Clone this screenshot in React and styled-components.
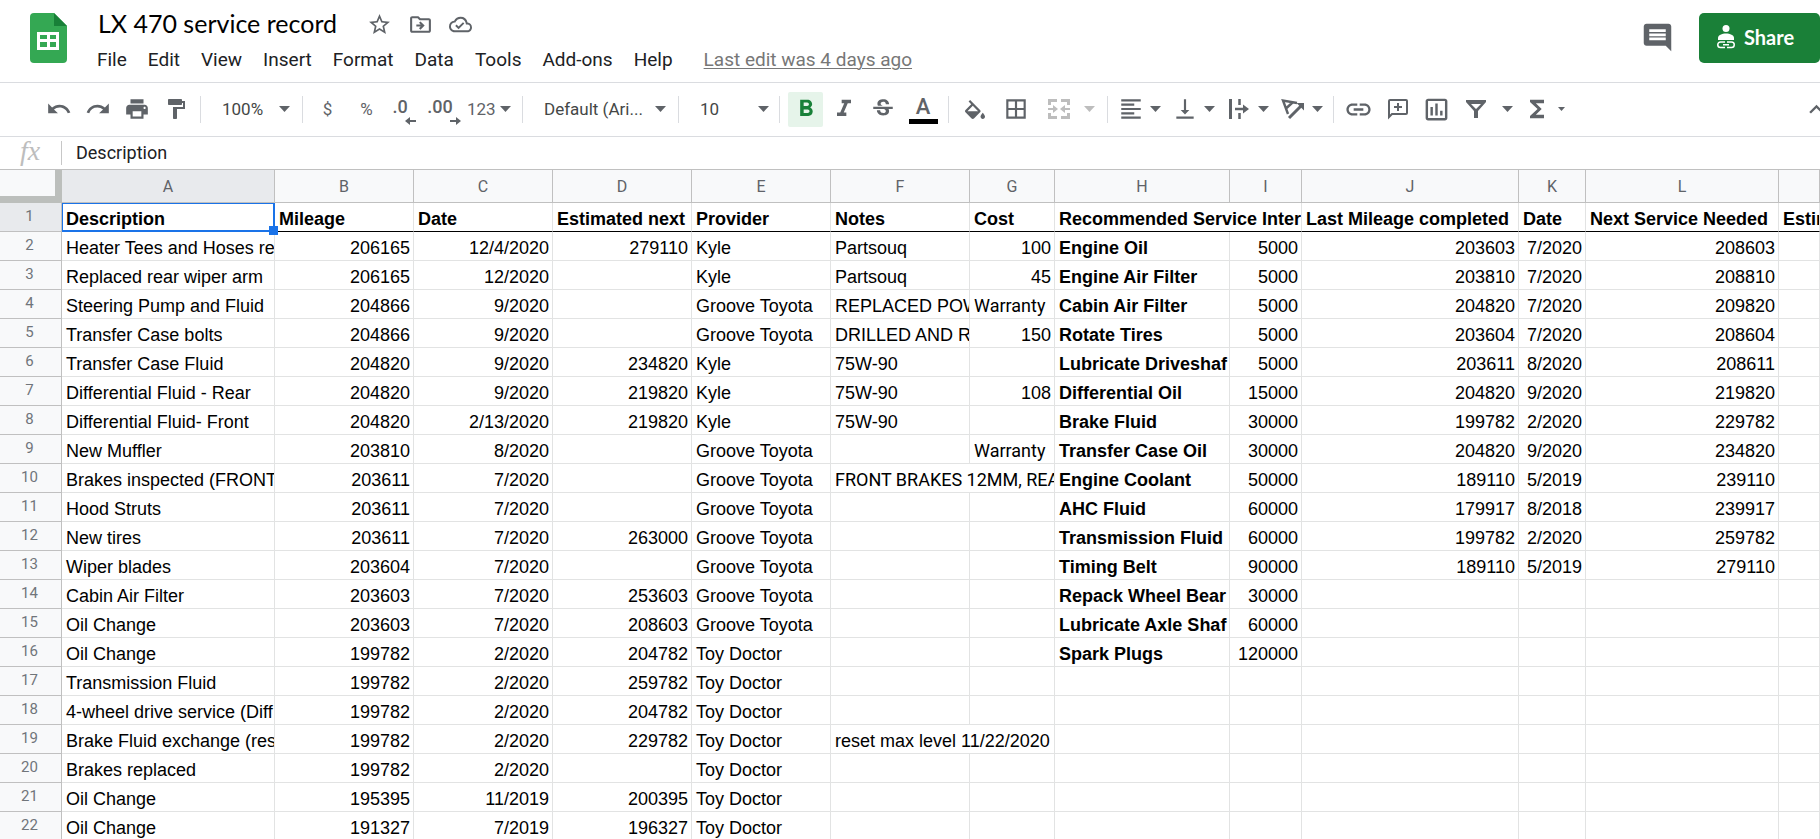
import React from "react";
import styled, { createGlobalStyle } from "styled-components";
import {
  MdUndo, MdRedo, MdPrint, MdFormatPaint, MdFormatBold, MdFormatItalic, MdStrikethroughS,
  MdBorderAll, MdFormatAlignLeft, MdVerticalAlignBottom, MdLink, MdFunctions, MdStarBorder,
  MdOutlineDriveFileMove, MdOutlineCloudDone, MdOutlineInsertChart, MdComment, MdExpandLess,
} from "react-icons/md";

const GlobalStyle = createGlobalStyle`
  * { box-sizing: border-box; }
  body {
    margin: 0;
    background: #fff;
    color: #000;
    font-family: Roboto, sans-serif;
    overflow: hidden;
  }
  button { font: inherit; color: inherit; border: 0; background: none; padding: 0; }
`;

const Header = styled.header`
  display: flex;
  height: 83px;
  border-bottom: 1px solid #dadce0;
  padding: 0 0 0 30px;
`;
const Logo = styled.a`
  margin-top: 13px;
  width: 37px;
  height: 50px;
  svg { display: block; }
`;
const Heading = styled.div`
  display: flex;
  flex-direction: column;
  padding-left: 20px;
  flex: 1;
  min-width: 0;
`;
const TitleRow = styled.div`
  display: flex;
  align-items: center;
  height: 46px;
  padding: 2px 0 0 11px;
`;
const Title = styled.h1`
  margin: 0 30px 0 0;
  padding-bottom: 2px;
  font: 400 25px/32px Lato, sans-serif;
  white-space: nowrap;
`;
const TitleButton = styled.button`
  display: flex;
  color: #5f6368;
  margin-right: 16px;
`;
const MenuRow = styled.nav`
  display: flex;
  align-items: center;
  gap: 1px;
  height: 28px;
  white-space: nowrap;
`;
const MenuButton = styled.button`
  font-size: 19px;
  line-height: 28px;
  padding: 0 10px;
  color: #202124;
`;
const EditLink = styled.a`
  margin-left: 20px;
  font-size: 19px;
  line-height: 28px;
  color: #777;
  text-underline-offset: 2px;
  text-decoration-thickness: 1px;
`;
const HeaderActions = styled.div`
  display: flex;
  align-items: flex-start;
  padding-top: 13px;
  gap: 25px;
`;
const CommentButton = styled.button`
  display: flex;
  align-items: center;
  height: 48px;
  color: #5f6368;
`;
const ShareButton = styled.button`
  display: flex;
  align-items: center;
  gap: 8px;
  width: 121px;
  height: 50px;
  padding: 0 0 2px 17px;
  border-radius: 5px;
  background: #1a8038;
  color: #fff;
  font: 700 20px/24px Lato, sans-serif;
`;

const Toolbar = styled.div`
  display: flex;
  align-items: center;
  height: 54px;
  padding: 0 0 1px 39px;
  border-bottom: 1px solid #dadce0;
  color: #5f6368;
  overflow: hidden;
`;
const Tool = styled.button`
  flex: none;
  display: flex;
  align-items: center;
  justify-content: center;
  width: ${(p) => p.$w || 39}px;
  height: 35px;
  font-size: 17px;
  color: ${(p) => (p.$muted ? "#bdbdbd" : "#5f6368")};
`;
const ActiveTool = styled(Tool)`
  width: 35px;
  margin: 0 1px 0 3px;
  border-radius: 2px;
  background: #e6f4ea;
  color: #188038;
`;
const MenuTool = styled(Tool)`
  justify-content: flex-start;
  padding-left: ${(p) => p.$pad || 5}px;
  gap: ${(p) => p.$gap || 6}px;
`;
const Choice = styled(MenuTool)`
  justify-content: space-between;
  padding-right: ${(p) => p.$right}px;
  color: #444746;
  svg { color: #5f6368; }
`;
const Decimals = styled.span`
  display: flex;
  flex-direction: column;
  align-items: flex-end;
  height: 25px;
  line-height: 20px;
  font-size: 18px;
  font-weight: 500;
  svg { display: block; flex: none; margin-right: -8px; }
`;
const TextColor = styled.span`
  display: flex;
  flex-direction: column;
  align-items: center;
  width: 29px;
  font-weight: 500;
  font-size: 22px;
  line-height: 24px;
  border-bottom: 5px solid #000;
`;
const Collapse = styled.button`
  flex: none;
  width: 18px;
  overflow: hidden;
  margin-left: auto;
  color: #5f6368;
  svg { display: block; }
`;
const Divider = styled.span`
  flex: none;
  width: 1px;
  height: 27px;
  margin: 0 5px 0 4px;
  background: #dadce0;
`;

const FormulaBar = styled.div`
  display: flex;
  align-items: center;
  height: 33px;
  padding-bottom: 1px;
  border-bottom: 1px solid #c0c0c0;
`;
const FormulaLabel = styled.label`
  width: 62px;
  height: 24px;
  padding-left: 20px;
  border-right: 1px solid #c7c7c7;
  font: italic 28px/20px "Liberation Serif", serif;
  color: #bdbdbd;
`;
const FormulaInput = styled.input`
  flex: 1;
  min-width: 0;
  height: 28px;
  padding: 0 14px;
  border: 0;
  outline: 0;
  font: 400 18px/28px Roboto, sans-serif;
  color: #202124;
`;

const Sheet = styled.table`
  width: 100%;
  table-layout: fixed;
  border-collapse: separate;
  border-spacing: 0;
`;
const Col = styled.col`
  width: ${(p) => (p.$w ? `${p.$w}px` : "auto")};
`;
const Corner = styled.td`
  height: 33px;
  padding: 0;
  background: #f8f9fa;
  border-right: 7px solid #bcbfbc;
  border-bottom: 7px solid #bcbfbc;
`;
const ColumnHead = styled.th`
  height: 33px;
  padding: 0;
  font-size: 16px;
  font-weight: 400;
  color: #5f6368;
  background: ${(p) => (p.$on ? "#e8eaed" : "#f8f9fa")};
  border-right: 1px solid #c0c0c0;
  border-bottom: 1px solid #c0c0c0;
`;
const RowHead = styled.th`
  height: 29px;
  padding: 0 2px 2px 0;
  font-size: 15px;
  line-height: 20px;
  font-weight: 400;
  color: #70757a;
  background: ${(p) => (p.$on ? "#e8eaed" : "#f8f9fa")};
  border-right: 1px solid #c0c0c0;
  border-bottom: 1px solid #c0c0c0;
`;
const Cell = styled.td`
  position: relative;
  height: 29px;
  padding: ${(p) => (p.$right ? "4px 3px 0 0" : "4px 0 0 4px")};
  font-family: ${(p) => (p.$roboto ? "Roboto" : '"Liberation Sans"')}, sans-serif;
  font-size: 18px;
  line-height: 24px;
  font-weight: ${(p) => (p.$bold ? 700 : 400)};
  text-align: ${(p) => (p.$right ? "right" : "left")};
  white-space: nowrap;
  overflow: hidden;
  border-right: 1px solid #e2e3e3;
  border-bottom: 1px solid ${(p) => (p.$frozen ? "#000" : "#e2e3e3")};
`;
const SelectedCell = styled(Cell)`
  overflow: visible;
  border-right-color: #1a73e8;
  border-bottom-color: #1a73e8;
  box-shadow: inset 1px 1px #1a73e8, inset -1px -1px #1a73e8;
`;
const FillHandle = styled.span`
  position: absolute;
  z-index: 1;
  right: -4px;
  bottom: -4px;
  width: 9px;
  height: 9px;
  background: #1a73e8;
`;

const Arrow = ({ small }) => (
  <svg width={small ? 7 : 11} height={small ? 4 : 6} viewBox="0 0 12 6" preserveAspectRatio="none" fill="currentColor">
    <path d="M0 0h12L6 6z" />
  </svg>
);
const ShiftArrow = ({ flip }) => (
  <svg width="11" height="8" viewBox="0 0 11 8" fill="currentColor">
    <path d={flip ? "M0 3h6V0l5 4-5 4V5H0z" : "M11 3H5V0L0 4l5 4V5h6z"} />
  </svg>
);
const SheetsLogo = () => (
  <svg width="37" height="50" viewBox="0 0 37 50">
    <path d="M4 0h20l13 13v33a4 4 0 0 1-4 4H4a4 4 0 0 1-4-4V4a4 4 0 0 1 4-4z" fill="#34a853" />
    <path d="M24 0l13 13H24z" fill="#188038" />
    <path fillRule="evenodd" fill="#fff" d="M7 19h22v18H7zM10 22v4h7v-4zM20 22v4h6v-4zM10 29v5h7v-5zM20 29v5h6v-5z" />
  </svg>
);
const FillColorIcon = () => (
  <svg width="20" height="19" viewBox="3 0 18 17" fill="currentColor">
    <path d="M16.560 8.940L7.620 0 6.210 1.410l2.380 2.380-5.150 5.150c-.59.59-.59 1.540 0 2.120l5.500 5.500c.29.29.68.44 1.060.44s.77-.15 1.060-.44l5.500-5.500c.59-.58.59-1.530 0-2.120zM5.210 10L10 5.210 14.790 10H5.210zM19 11.500s-2 2.170-2 3.500c0 1.100.9 2 2 2s2-.9 2-2c0-1.330-2-3.500-2-3.500z" />
  </svg>
);
const MergeIcon = () => (
  <svg width="24" height="22" viewBox="0 0 24 22" fill="none" stroke="currentColor" strokeWidth="3">
    <path d="M2.500 7V2.500H10M14 2.500h7.500V7M2.500 15v4.500H10M14 19.500h7.500V15" />
    <path d="M1 11h6M23 11h-6" strokeWidth="2" />
    <path d="M6 7l5 4-5 4zM18 7l-5 4 5 4z" fill="currentColor" stroke="none" />
  </svg>
);
const OverflowIcon = () => (
  <svg width="26" height="24" viewBox="0 0 26 24" fill="none" stroke="currentColor">
    <path d="M4.500 2v20" strokeWidth="3" />
    <path d="M13.500 2v6M13.500 16v6M9 12h9" strokeWidth="2.500" />
    <path d="M17 7.500l6 4.500-6 4.500z" fill="currentColor" stroke="none" />
  </svg>
);
const RotateIcon = () => (
  <svg width="26" height="22" viewBox="0 0 26 22" fill="none" stroke="currentColor" strokeWidth="2.400">
    <path d="M17 5L3 2.500 8 16M12.500 4.500L6 10.500" />
    <path d="M9 20L21 8" strokeWidth="3" />
    <path d="M16.500 5H24v7.500z" fill="currentColor" stroke="none" />
  </svg>
);
const AddCommentIcon = () => (
  <svg width="22" height="22" viewBox="0 0 22 22" fill="none" stroke="currentColor" strokeWidth="2">
    <path d="M2 19V3a1 1 0 0 1 1-1h16a1 1 0 0 1 1 1v12a1 1 0 0 1-1 1H5z" />
    <path d="M11 5v8M7 9h8" />
  </svg>
);
const FilterIcon = () => (
  <svg width="20" height="18" viewBox="0 0 20 18" fill="currentColor" fillRule="evenodd">
    <path d="M0 0h20v2l-8 9v7H8v-7L0 2zM5 4l5 5 5-5z" />
  </svg>
);
const ShareIcon = () => (
  <svg width="20" height="24" viewBox="0 0 20 24" fill="#fff">
    <circle cx="10" cy="3.500" r="3.500" />
    <path d="M2 15v-2c0-3 4-4.500 8-4.500s8 1.500 8 4.500v2z" />
    <path d="M9 17H4.500a2.700 2.700 0 0 0 0 5.500H9M11 17h4.500a2.700 2.700 0 0 1 0 5.500H11M7 19.800h6" fill="none" stroke="#fff" strokeWidth="1.500" />
  </svg>
);

const MENUS = ["File", "Edit", "View", "Insert", "Format", "Data", "Tools", "Add-ons", "Help"];
const COLUMNS = [
  ["A", 213], ["B", 139], ["C", 139], ["D", 139], ["E", 139], ["F", 139], ["G", 85],
  ["H", 175], ["I", 72], ["J", 217], ["K", 67], ["L", 193], ["", 0],
];
const G = "Groove Toyota";
const T = "Toy Doctor";
const ROWS = [
  ["Description", "Mileage", "Date", "Estimated next", "Provider", "Notes", "Cost", "Recommended Service Inter", null, "Last Mileage completed", "Date", "Next Service Needed", "Estim"],
  ["Heater Tees and Hoses re", "206165", "12/4/2020", "279110", "Kyle", "Partsouq", "100", "Engine Oil", "5000", "203603", "7/2020", "208603"],
  ["Replaced rear wiper arm", "206165", "12/2020", "", "Kyle", "Partsouq", "45", "Engine Air Filter", "5000", "203810", "7/2020", "208810"],
  ["Steering Pump and Fluid", "204866", "9/2020", "", G, "REPLACED POW", "Warranty", "Cabin Air Filter", "5000", "204820", "7/2020", "209820"],
  ["Transfer Case bolts", "204866", "9/2020", "", G, "DRILLED AND R", "150", "Rotate Tires", "5000", "203604", "7/2020", "208604"],
  ["Transfer Case Fluid", "204820", "9/2020", "234820", "Kyle", "75W-90", "", "Lubricate Driveshaf", "5000", "203611", "8/2020", "208611"],
  ["Differential Fluid - Rear", "204820", "9/2020", "219820", "Kyle", "75W-90", "108", "Differential Oil", "15000", "204820", "9/2020", "219820"],
  ["Differential Fluid- Front", "204820", "2/13/2020", "219820", "Kyle", "75W-90", "", "Brake Fluid", "30000", "199782", "2/2020", "229782"],
  ["New Muffler", "203810", "8/2020", "", G, "", "Warranty", "Transfer Case Oil", "30000", "204820", "9/2020", "234820"],
  ["Brakes inspected (FRONT", "203611", "7/2020", "", G, "FRONT BRAKES 12MM, REA", null, "Engine Coolant", "50000", "189110", "5/2019", "239110"],
  ["Hood Struts", "203611", "7/2020", "", G, "", "", "AHC Fluid", "60000", "179917", "8/2018", "239917"],
  ["New tires", "203611", "7/2020", "263000", G, "", "", "Transmission Fluid", "60000", "199782", "2/2020", "259782"],
  ["Wiper blades", "203604", "7/2020", "", G, "", "", "Timing Belt", "90000", "189110", "5/2019", "279110"],
  ["Cabin Air Filter", "203603", "7/2020", "253603", G, "", "", "Repack Wheel Bear", "30000"],
  ["Oil Change", "203603", "7/2020", "208603", G, "", "", "Lubricate Axle Shaf", "60000"],
  ["Oil Change", "199782", "2/2020", "204782", T, "", "", "Spark Plugs", "120000"],
  ["Transmission Fluid", "199782", "2/2020", "259782", T],
  ["4-wheel drive service (Diff", "199782", "2/2020", "204782", T],
  ["Brake Fluid exchange (res", "199782", "2/2020", "229782", T, "reset max level 11/22/2020", null],
  ["Brakes replaced", "199782", "2/2020", "", T],
  ["Oil Change", "195395", "11/2019", "200395", T],
  ["Oil Change", "191327", "7/2019", "196327", T],
];

const isNumeric = (s) => /^[\d/]+$/.test(s);
const isRoboto = (s) => /^(FRONT|Warranty)/.test(s);

const SheetRow = ({ values, index }) => (
  <tr>
    <RowHead scope="row" $on={index === 0}>{index + 1}</RowHead>
    {COLUMNS.map((_, c) => {
      const text = values[c];
      if (text === null) return null;
      if (index === 0 && c === 0) {
        return <SelectedCell key={c} $bold>{text}<FillHandle /></SelectedCell>;
      }
      const value = text || "";
      return (
        <Cell
          key={c}
          colSpan={values[c + 1] === null ? 2 : 1}
          $frozen={index === 0}
          $bold={index === 0 || c === 7}
          $right={isNumeric(value)}
          $roboto={isRoboto(value)}
        >
          {value}
        </Cell>
      );
    })}
  </tr>
);

export default function App() {
  return (
    <>
      <GlobalStyle />
      <Header>
        <Logo href="#" aria-label="Sheets home"><SheetsLogo /></Logo>
        <Heading>
          <TitleRow>
            <Title>LX 470 service record</Title>
            <TitleButton aria-label="Star"><MdStarBorder size={25} /></TitleButton>
            <TitleButton aria-label="Move"><MdOutlineDriveFileMove size={25} /></TitleButton>
            <TitleButton aria-label="Saved to Drive"><MdOutlineCloudDone size={23} /></TitleButton>
          </TitleRow>
          <MenuRow>
            {MENUS.map((m) => <MenuButton key={m}>{m}</MenuButton>)}
            <EditLink href="#">Last edit was 4 days ago</EditLink>
          </MenuRow>
        </Heading>
        <HeaderActions>
          <CommentButton aria-label="Comments"><MdComment size={33} /></CommentButton>
          <ShareButton><ShareIcon />Share</ShareButton>
        </HeaderActions>
      </Header>

      <Toolbar role="toolbar">
        <Tool aria-label="Undo"><MdUndo size={26} /></Tool>
        <Tool aria-label="Redo"><MdRedo size={26} /></Tool>
        <Tool aria-label="Print"><MdPrint size={26} /></Tool>
        <Tool $w={40} aria-label="Paint format"><MdFormatPaint size={24} /></Tool>
        <Divider />
        <Choice $w={92} $pad={16} $right={8}>100%<Arrow /></Choice>
        <Divider />
        <Tool>$</Tool>
        <Tool>%</Tool>
        <Tool $w={28} aria-label="Decrease decimal places"><Decimals>.0<ShiftArrow /></Decimals></Tool>
        <Tool $w={52} aria-label="Increase decimal places"><Decimals>.00<ShiftArrow flip /></Decimals></Tool>
        <MenuTool $w={52} $pad={1} $gap={4}>123<Arrow /></MenuTool>
        <Divider />
        <Choice $w={146} $pad={16} $right={8}>Default (Ari...<Arrow /></Choice>
        <Divider />
        <Choice $w={91} $pad={16} $right={6}>10<Arrow /></Choice>
        <Divider />
        <ActiveTool aria-label="Bold"><MdFormatBold size={28} /></ActiveTool>
        <Tool aria-label="Italic"><MdFormatItalic size={28} /></Tool>
        <Tool aria-label="Strikethrough"><MdStrikethroughS size={26} /></Tool>
        <Tool $w={42} aria-label="Text color"><TextColor>A</TextColor></Tool>
        <Divider />
        <Tool $w={42} aria-label="Fill color"><FillColorIcon /></Tool>
        <Tool $w={40} aria-label="Borders"><MdBorderAll size={26} /></Tool>
        <MenuTool $w={67} $pad={11} $gap={13} $muted aria-label="Merge cells"><MergeIcon /><Arrow /></MenuTool>
        <Divider />
        <MenuTool $w={54} aria-label="Horizontal align"><MdFormatAlignLeft size={26} /><Arrow /></MenuTool>
        <MenuTool $w={54} aria-label="Vertical align"><MdVerticalAlignBottom size={26} /><Arrow /></MenuTool>
        <MenuTool $w={54} aria-label="Text wrapping"><OverflowIcon /><Arrow /></MenuTool>
        <MenuTool $w={54} aria-label="Text rotation"><RotateIcon /><Arrow /></MenuTool>
        <Divider />
        <Tool aria-label="Insert link"><MdLink size={29} /></Tool>
        <Tool aria-label="Insert comment"><AddCommentIcon /></Tool>
        <Tool aria-label="Insert chart"><MdOutlineInsertChart size={29} /></Tool>
        <Tool aria-label="Filter"><FilterIcon /></Tool>
        <Tool $w={24} aria-label="Filter views"><Arrow /></Tool>
        <Tool $w={36} aria-label="Functions"><MdFunctions size={28} /></Tool>
        <Tool $w={12} aria-label="More functions"><Arrow small /></Tool>
        <Collapse aria-label="Hide menus"><MdExpandLess size={29} /></Collapse>
      </Toolbar>

      <FormulaBar>
        <FormulaLabel htmlFor="formula">fx</FormulaLabel>
        <FormulaInput id="formula" defaultValue="Description" />
      </FormulaBar>

      <Sheet>
        <colgroup>
          <Col $w={62} />
          {COLUMNS.map(([name, w]) => <Col key={name} $w={w} />)}
        </colgroup>
        <thead>
          <tr>
            <Corner />
            {COLUMNS.map(([name], i) => <ColumnHead key={name} scope="col" $on={i === 0}>{name}</ColumnHead>)}
          </tr>
        </thead>
        <tbody>
          {ROWS.map((values, i) => <SheetRow key={i} values={values} index={i} />)}
        </tbody>
      </Sheet>
    </>
  );
}
